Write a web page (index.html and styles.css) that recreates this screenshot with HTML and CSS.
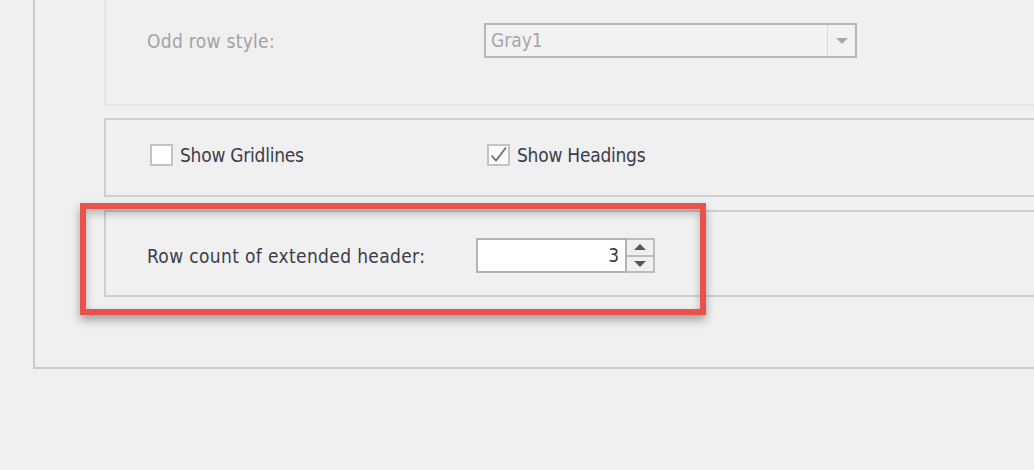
FILE: index.html
```html
<!DOCTYPE html>
<html>
<head>
<meta charset="utf-8">
<link rel="stylesheet" href="styles.css">
</head>
<body>
<div class="screen">
  <div class="outer">
    <div class="group group-disabled">
      <div class="row row-combo">
        <span class="label label-disabled">Odd row style:</span>
        <div class="combo">
          <span class="combo-text">Gray1</span>
          <span class="combo-btn">
            <svg width="12" height="6" viewBox="0 0 12 6"><path d="M0 0 H12 L6 6 Z" fill="#a9a9a9"/></svg>
          </span>
        </div>
      </div>
    </div>
    <div class="group group-checks">
      <div class="row row-checks">
        <label class="check-item">
          <span class="checkbox"></span>
          <span class="label label-check">Show Gridlines</span>
        </label>
        <label class="check-item">
          <span class="checkbox checked">
            <svg width="18" height="18" viewBox="0 0 18 18"><path d="M1.5 9.5 L6 14.5 L16 1.5" fill="none" stroke="#707070" stroke-width="1.8"/></svg>
          </span>
          <span class="label label-check">Show Headings</span>
        </label>
      </div>
    </div>
    <div class="group group-spin">
      <div class="row row-spin">
        <span class="label label-spin">Row count of extended header:</span>
        <div class="spin">
          <div class="spin-edit">3</div>
          <div class="spin-btns">
            <span class="spin-btn">
              <svg width="12" height="6" viewBox="0 0 12 6"><path d="M0 6 H12 L6 0 Z" fill="#555"/></svg>
            </span>
            <span class="spin-btn spin-btn-down">
              <svg width="12" height="6" viewBox="0 0 12 6"><path d="M0 0 H12 L6 6 Z" fill="#555"/></svg>
            </span>
          </div>
        </div>
      </div>
    </div>
  </div>
  <div class="highlight"></div>
</div>
</body>
</html>
```

FILE: styles.css
```css
* { box-sizing: border-box; }
html, body { margin: 0; padding: 0; background: #f0f0f0; }
.screen {
  position: relative;
  width: 1034px;
  height: 470px;
  overflow: hidden;
  background: #f0f0f0;
  font-family: "DejaVu Sans Condensed", "DejaVu Sans", sans-serif;
  font-stretch: semi-condensed;
  font-size: 19px;
  color: #3c3c4a;
}
.outer {
  margin-left: 33px;
  width: 1100px;
  border-left: 2px solid #cbcbcb;
  border-bottom: 2px solid #cbcbcb;
  padding: 0 0 70px 69px;
}
.group {
  border: 2px solid #cfcfcf;
}
.group-disabled {
  border-color: #e5e5e5;
  border-top: none;
  height: 106px;
  padding: 23px 0 0 41px;
}
.group-checks {
  margin-top: 12px;
  height: 79px;
  padding: 24px 0 0 44px;
}
.group-spin {
  margin-top: 13px;
  height: 87px;
  padding: 26px 0 0 41px;
}
.row { display: flex; align-items: center; }
.label { line-height: 22px; white-space: nowrap; }
.label-disabled { color: #a3a3a3; width: 337px; letter-spacing: 0.3px; }
.label-check { letter-spacing: -0.25px; }
.combo {
  display: flex;
  width: 373px;
  height: 35px;
  border: 2px solid #b6b6b6;
  background: #f2f2f2;
}
.combo-text {
  flex: 1;
  color: #a6a6a6;
  padding-left: 5px;
  line-height: 31px;
}
.combo-btn {
  width: 28px;
  border-left: 1px solid #dadada;
  display: flex;
  align-items: center;
  justify-content: center;
}
.check-item { display: flex; align-items: center; gap: 7px; width: 337px; }
.checkbox {
  width: 23px;
  height: 22px;
  border: 2px solid #c3c3c3;
  background: #ffffff;
  display: flex;
  align-items: center;
  justify-content: center;
}
.checkbox.checked { background: #fbfbfb; }
.label-spin { width: 329px; letter-spacing: 0.35px; }
.spin { display: flex; height: 35px; }
.spin-edit {
  width: 151px;
  height: 35px;
  border: 2px solid #b3b3b3;
  background: #ffffff;
  text-align: right;
  padding-right: 6px;
  line-height: 31px;
  color: #3c3c4a;
}
.spin-btns {
  width: 28px;
  display: flex;
  flex-direction: column;
  border: 2px solid #bdbdbd;
  border-left: none;
}
.spin-btn {
  flex: 1;
  display: flex;
  align-items: center;
  justify-content: center;
}
.spin-btn-down { border-top: 2px solid #bdbdbd; }
.highlight {
  position: absolute;
  left: 80px;
  top: 203px;
  width: 626px;
  height: 112px;
  border: 6px solid #e8524b;
  box-shadow: 0 5px 9px rgba(0, 0, 0, 0.34), inset 0 4px 8px rgba(0, 0, 0, 0.26);
}
```
